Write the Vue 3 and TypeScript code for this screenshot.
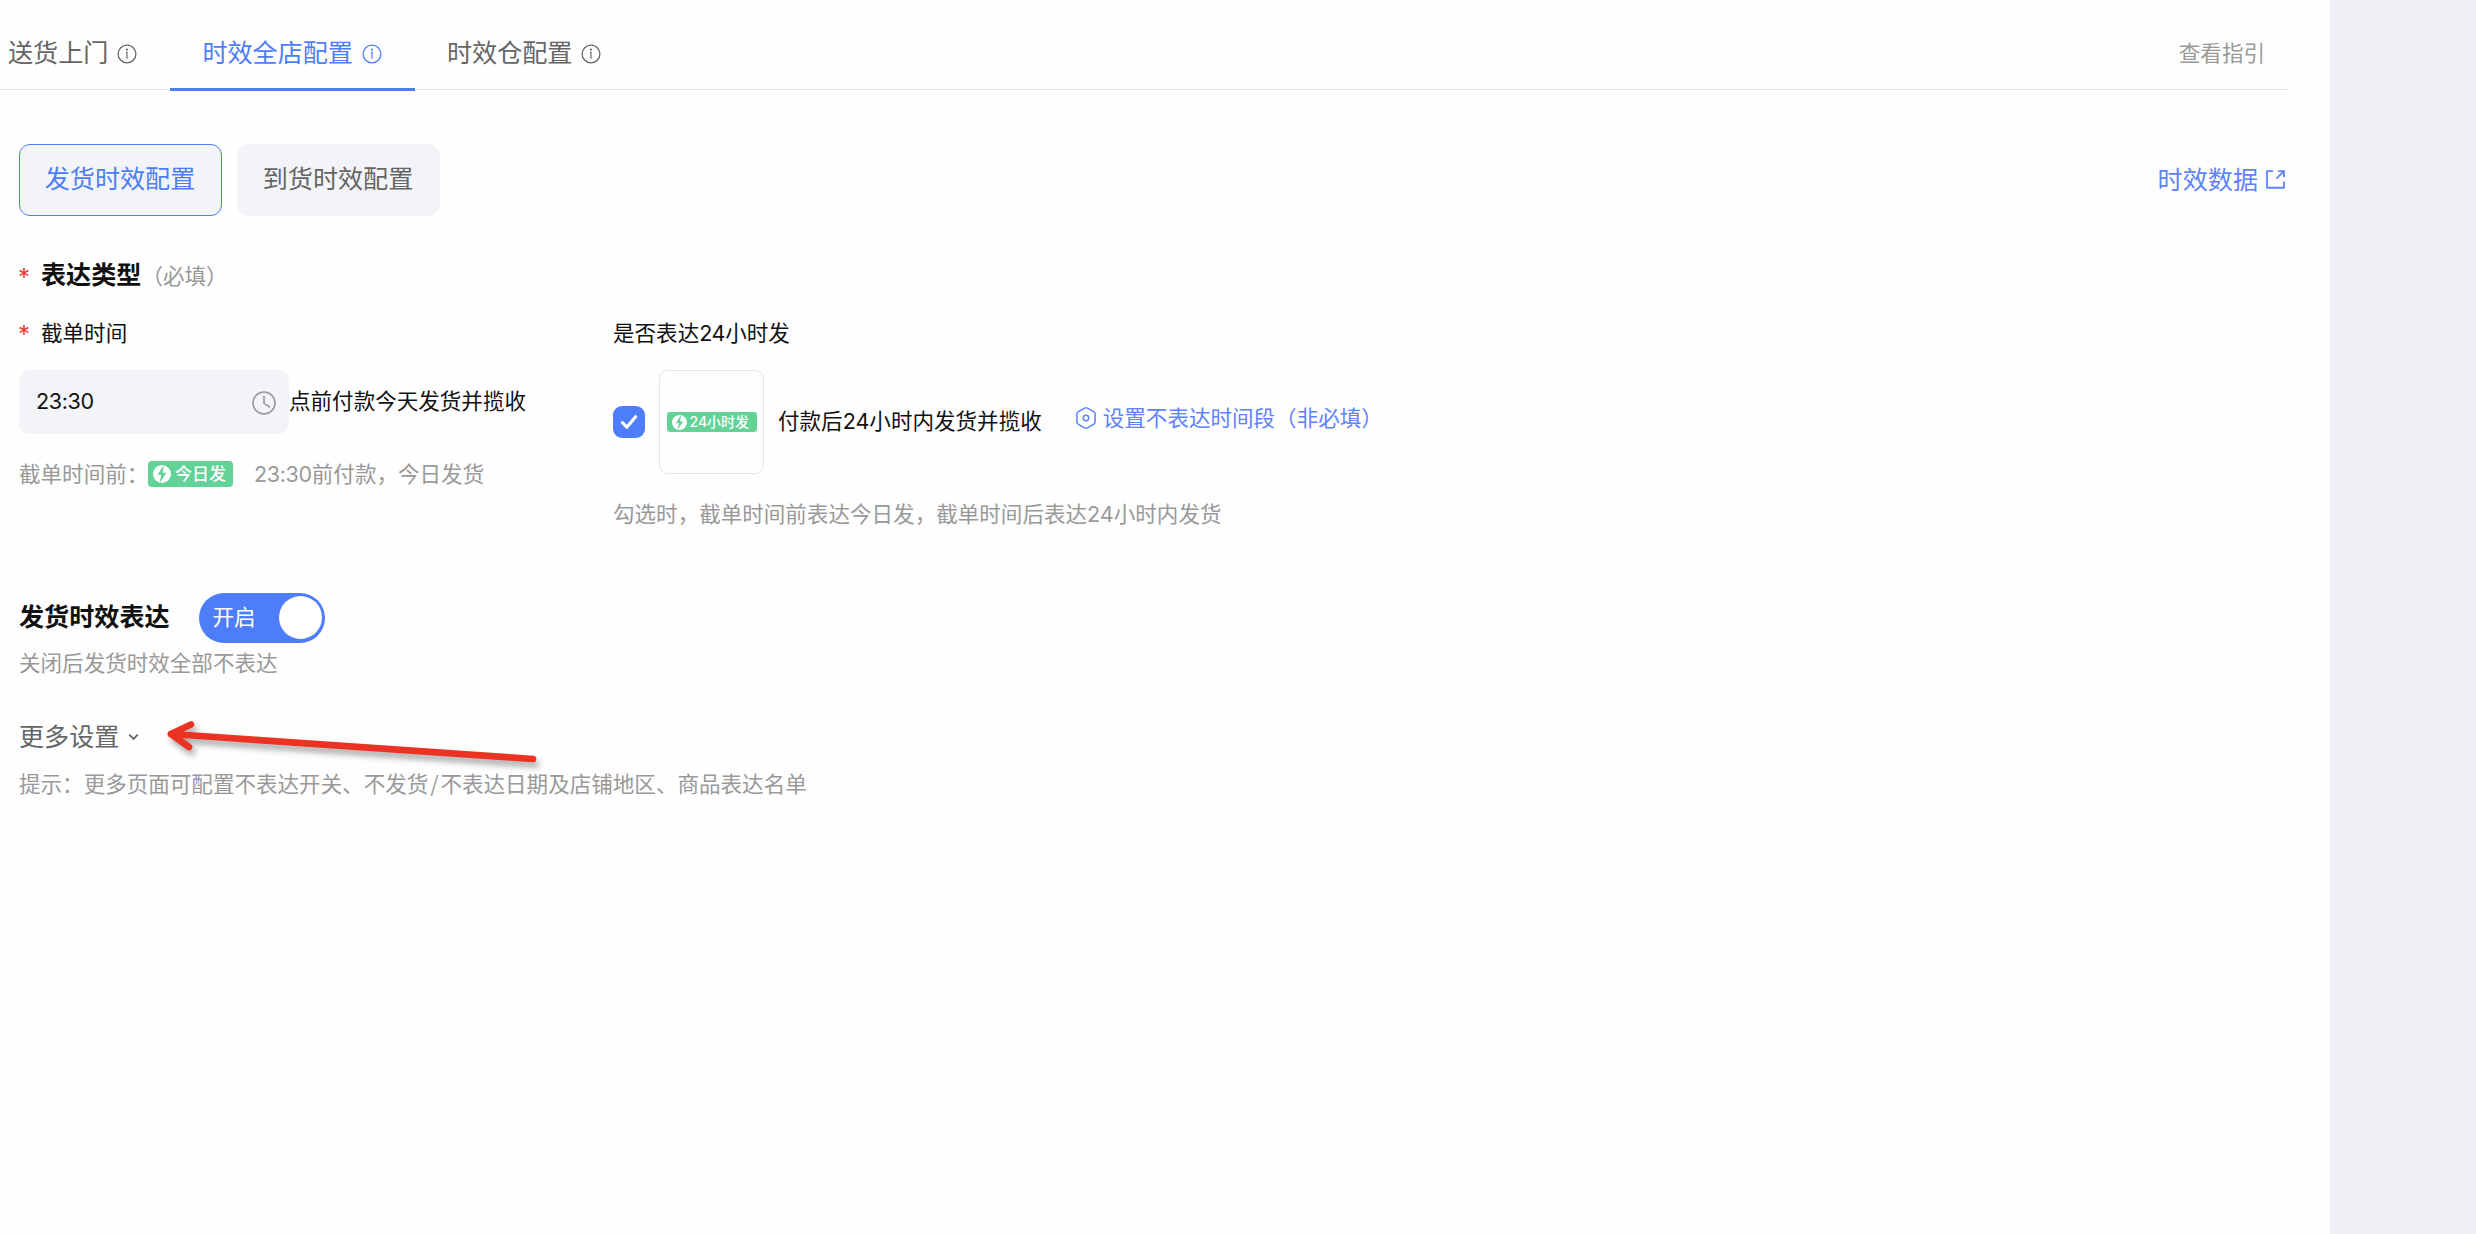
<script setup lang="ts">
import { ref } from 'vue'

interface Tab {
  key: string
  label: string
}

const tabs: Tab[] = [
  { key: 'door', label: '送货上门' },
  { key: 'store', label: '时效全店配置' },
  { key: 'warehouse', label: '时效仓配置' },
]
const activeTab = ref('store')

const modes: Tab[] = [
  { key: 'ship', label: '发货时效配置' },
  { key: 'arrive', label: '到货时效配置' },
]
const activeMode = ref('ship')

const cutoff = ref('23:30')
const express24 = ref(true)
const enabled = ref(true)
</script>

<template>
  <div class="page">
    <main class="panel">
      <nav class="tabs">
        <a
          v-for="tab in tabs"
          :key="tab.key"
          class="tab"
          :class="{ active: tab.key === activeTab }"
          @click="activeTab = tab.key"
        >
          <span>{{ tab.label }}</span>
          <svg class="info" viewBox="0 0 20 20">
            <circle cx="10" cy="10" r="8.9" fill="none" stroke="currentColor" stroke-width="1.3" />
            <circle cx="9.9" cy="5.6" r="1.1" fill="currentColor" />
            <path d="M8.9 8.4H10V14.8" fill="none" stroke="currentColor" stroke-width="1.2" />
          </svg>
        </a>
        <a class="guide">查看指引</a>
      </nav>

      <div class="modes">
        <button
          v-for="mode in modes"
          :key="mode.key"
          class="mode"
          :class="{ active: mode.key === activeMode }"
          @click="activeMode = mode.key"
        >
          {{ mode.label }}
        </button>
        <a class="data-link">
          <span>时效数据</span>
          <svg class="external" viewBox="0 0 18 18" fill="none" stroke="currentColor" stroke-width="1.7">
            <path d="M6.6 1H1V16.8H17V11" />
            <path d="M11.4 1H17V6.6M17 1L9.8 8.2" />
          </svg>
        </a>
      </div>

      <h2 class="title type-title">
        <i class="star">*</i><span>表达类型</span><small>（必填）</small>
      </h2>

      <div class="columns">
        <section class="left">
          <div class="label"><i class="star">*</i><span>截单时间</span></div>
          <div class="time-row">
            <div class="time-input">
              <span class="num">{{ cutoff }}</span>
              <svg class="clock" viewBox="0 0 24 24" fill="none" stroke="currentColor" stroke-width="1.6">
                <circle cx="12" cy="12" r="11" />
                <path d="M12 4.8V12.4L18 16.2" />
              </svg>
            </div>
            <span class="time-text">点前付款今天发货并揽收</span>
          </div>
          <div class="preview">
            <span class="preview-label">截单时间前：</span>
            <span class="badge today">
              <svg class="bolt" viewBox="0 0 18 18">
                <circle cx="9" cy="9" r="9" fill="#fff" />
                <path d="M10.8 0L4.6 9.8H8.3L6.6 18L13.4 7.8H9.7Z" fill="#63d297" />
              </svg>
              <span>今日发</span>
            </span>
            <span class="preview-text"><span class="time">{{ cutoff }}</span>前付款，今日发货</span>
          </div>
        </section>

        <section class="right">
          <div class="label">是否表达<span class="digits">24</span>小时发</div>
          <div class="check-row">
            <span class="checkbox" @click="express24 = !express24">
              <svg v-if="express24" viewBox="0 0 32 32" fill="none" stroke="#fff" stroke-width="3.2" stroke-linecap="round" stroke-linejoin="round">
                <path d="M9.4 16.6L13.8 21.2L22.6 10.8" />
              </svg>
            </span>
            <span class="card">
              <span class="badge day">
                <svg class="bolt" viewBox="0 0 18 18">
                  <circle cx="9" cy="9" r="9" fill="#fff" />
                  <path d="M10.8 0L4.6 9.8H8.3L6.6 18L13.4 7.8H9.7Z" fill="#63d297" />
                </svg>
                <span>24小时发</span>
              </span>
            </span>
            <span class="check-text">付款后24小时内发货并揽收</span>
            <a class="period">
              <svg class="hex" viewBox="0 0 20 22" fill="none" stroke="currentColor" stroke-width="1.5" stroke-linejoin="round">
                <path d="M8.6 1.2Q10 .5 11.4 1.2L17.9 4.9Q19.1 5.6 19.1 7V15Q19.1 16.4 17.9 17.1L11.4 20.8Q10 21.5 8.6 20.8L2.1 17.1Q.9 16.4 .9 15V7Q.9 5.6 2.1 4.9Z" />
                <circle cx="10" cy="11" r="2.7" />
              </svg>
              <span>设置不表达时间段（非必填）</span>
            </a>
          </div>
          <p class="note">勾选时，截单时间前表达今日发，截单时间后表达24小时内发货</p>
        </section>
      </div>

      <div class="switch-row">
        <h2 class="title">发货时效表达</h2>
        <span class="switch" :class="{ off: !enabled }" @click="enabled = !enabled">
          <span>开启</span><i class="knob"></i>
        </span>
      </div>
      <p class="switch-note">关闭后发货时效全部不表达</p>

      <div class="more">
        <span>更多设置</span>
        <svg class="chevron" viewBox="0 0 12 8" fill="none" stroke="currentColor" stroke-width="2">
          <path d="M1.4 1.4L6 6L10.6 1.4" />
        </svg>
        <svg class="arrow" viewBox="0 0 400 60" fill="none" stroke="#ea3323" stroke-width="6.6" stroke-linecap="round" stroke-linejoin="round">
          <path d="M11 18L373 43" />
          <path d="M31 8.5L11 18L29 31" />
        </svg>
      </div>
      <p class="hint">提示：更多页面可配置不表达开关、不发货<span class="slash">/</span>不表达日期及店铺地区、商品表达名单</p>
    </main>
  </div>
</template>

<style>
body {
  margin: 0;
  background: #eef0f6;
}
</style>

<style scoped>
.page {
  box-sizing: border-box;
  width: 2476px;
  height: 1234px;
  overflow: hidden;
  background: #eef0f6;
  color: #111;
  font: 21.55px/32px Inter, "Noto Sans CJK SC", sans-serif;
  white-space: nowrap;
}
.panel {
  box-sizing: border-box;
  width: 2330px;
  height: 1234px;
  padding-right: 43px;
  background: #fefefe;
}
h2,
p {
  margin: 0;
  font-weight: 400;
}
i {
  font-style: normal;
}
svg {
  display: block;
  flex: none;
}
.tabs {
  display: flex;
  box-sizing: border-box;
  height: 90px;
  border-bottom: 1px solid #e3e4e7;
}
.tab {
  display: flex;
  align-items: center;
  gap: 9px;
  box-sizing: border-box;
  height: 91px;
  padding: 18px 33px 0 32px;
  border-bottom: 3px solid transparent;
  color: #666;
  font-size: 25.1px;
}
.tab:first-child {
  padding-left: 8px;
}
.tab.active {
  color: #4d7df8;
  border-color: #4d7df8;
}
.info {
  width: 20px;
  height: 20px;
  margin-top: 1px;
}
.guide {
  margin: 37px 22px 0 auto;
  color: #999;
}
.modes {
  display: flex;
  align-items: center;
  gap: 15px;
  height: 72px;
  margin: 54px 0 0 19px;
}
.mode {
  box-sizing: border-box;
  width: 203px;
  height: 72px;
  padding: 0 1px 2px 0;
  border: 1px solid #f2f4f8;
  border-radius: 11px;
  background: #f2f4f8;
  color: #666;
  font: inherit;
  font-size: 25.1px;
}
.mode.active {
  border-color: #4d7df8;
  color: #4d7df8;
}
.data-link {
  display: flex;
  align-items: center;
  gap: 8px;
  margin: 0 2px 0 auto;
  color: #5f83fb;
  font-size: 25.1px;
}
.external {
  width: 19px;
  height: 19px;
  margin-top: -2px;
}
.title {
  font-size: 25.1px;
  font-weight: 700;
  line-height: 36px;
}
.star {
  display: inline-block;
  width: 23px;
  margin-left: -1px;
  color: #f03a2c;
  font-weight: 400;
  font-size: 24px;
  line-height: 20px;
  vertical-align: -2px;
}
.type-title {
  height: 36px;
  margin: 41px 0 0 19px;
}
small {
  color: #999;
  font-size: 21.55px;
  font-weight: 400;
}
.columns {
  display: flex;
  margin: 24px 0 0 19px;
}
.left {
  width: 594px;
}
.label {
  height: 53px;
}
.time-row {
  display: flex;
  align-items: center;
  height: 64px;
}
.time-text,
.num {
  margin-top: -2px;
}
.num {
  letter-spacing: -0.35px;
}
.time-input {
  display: flex;
  align-items: center;
  justify-content: space-between;
  box-sizing: border-box;
  width: 270px;
  height: 64px;
  padding: 0 13px 0 17px;
  border-radius: 11px;
  background: #f2f4f8;
}
.clock {
  width: 24px;
  height: 24px;
  margin-top: 1px;
  color: #999;
}
.preview {
  display: flex;
  align-items: center;
  height: 32px;
  margin-top: 24px;
  color: #999;
}
.preview-label {
  width: 129px;
}
.badge {
  display: flex;
  align-items: center;
  box-sizing: border-box;
  border-radius: 4px;
  background: #63d297;
  color: #fff;
  font-weight: 500;
}
.today {
  gap: 4px;
  width: 85px;
  height: 26px;
  padding-left: 5px;
  font-size: 17px;
}
.today .bolt {
  width: 18px;
  height: 18px;
}
.preview-text {
  margin-left: 21px;
}
.time {
  letter-spacing: -0.35px;
}
.digits {
  letter-spacing: -0.4px;
}
.check-row {
  display: flex;
  align-items: center;
  height: 104px;
}
.checkbox {
  width: 32px;
  height: 32px;
  border-radius: 9px;
  background: #4d7df8;
}
.card {
  display: flex;
  align-items: center;
  justify-content: center;
  box-sizing: border-box;
  width: 105px;
  height: 104px;
  margin-left: 14px;
  border: 1px solid #e3e4e8;
  border-radius: 9px;
}
.day {
  gap: 3px;
  width: 90px;
  height: 20px;
  padding-left: 5px;
  border-radius: 3px;
  font-size: 14px;
}
.day .bolt {
  width: 15px;
  height: 15px;
}
.check-text {
  margin: -2px 0 0 14px;
}
.period {
  display: flex;
  align-items: center;
  gap: 7px;
  margin: -8px 0 0 34px;
  color: #5f83fb;
}
.hex {
  width: 20px;
  height: 22px;
}
.note {
  margin-top: 24px;
  color: #999;
}
.switch-row {
  display: flex;
  align-items: center;
  gap: 29px;
  height: 50px;
  margin: 63px 0 0 19px;
}
.switch-row .title {
  margin-top: -2px;
}
.switch {
  display: flex;
  align-items: center;
  justify-content: space-between;
  box-sizing: border-box;
  width: 126px;
  height: 50px;
  padding: 0 3px 0 14px;
  border-radius: 25px;
  background: #4d7df8;
  color: #fff;
}
.switch.off {
  background: #bbb;
}
.switch span {
  margin-top: -2px;
}
.knob {
  width: 43px;
  height: 43px;
  margin-top: -1px;
  border-radius: 50%;
  background: #fff;
}
.switch-note {
  margin: 4px 0 0 19px;
  color: #999;
}
.more {
  position: relative;
  display: flex;
  align-items: center;
  gap: 9px;
  height: 36px;
  margin: 40px 0 0 19px;
  color: #666;
  font-size: 25.1px;
}
.chevron {
  width: 11px;
  height: 8px;
}
.arrow {
  position: absolute;
  left: 141px;
  top: -3px;
  width: 400px;
  height: 60px;
  filter: drop-shadow(3px 5px 3px rgba(0, 0, 0, 0.35));
}
.hint {
  margin: 13px 0 0 19px;
  color: #999;
}
.slash {
  margin: 0 1.8px;
  font-family: "Noto Sans CJK SC", sans-serif;
  line-height: 20px;
}
</style>
